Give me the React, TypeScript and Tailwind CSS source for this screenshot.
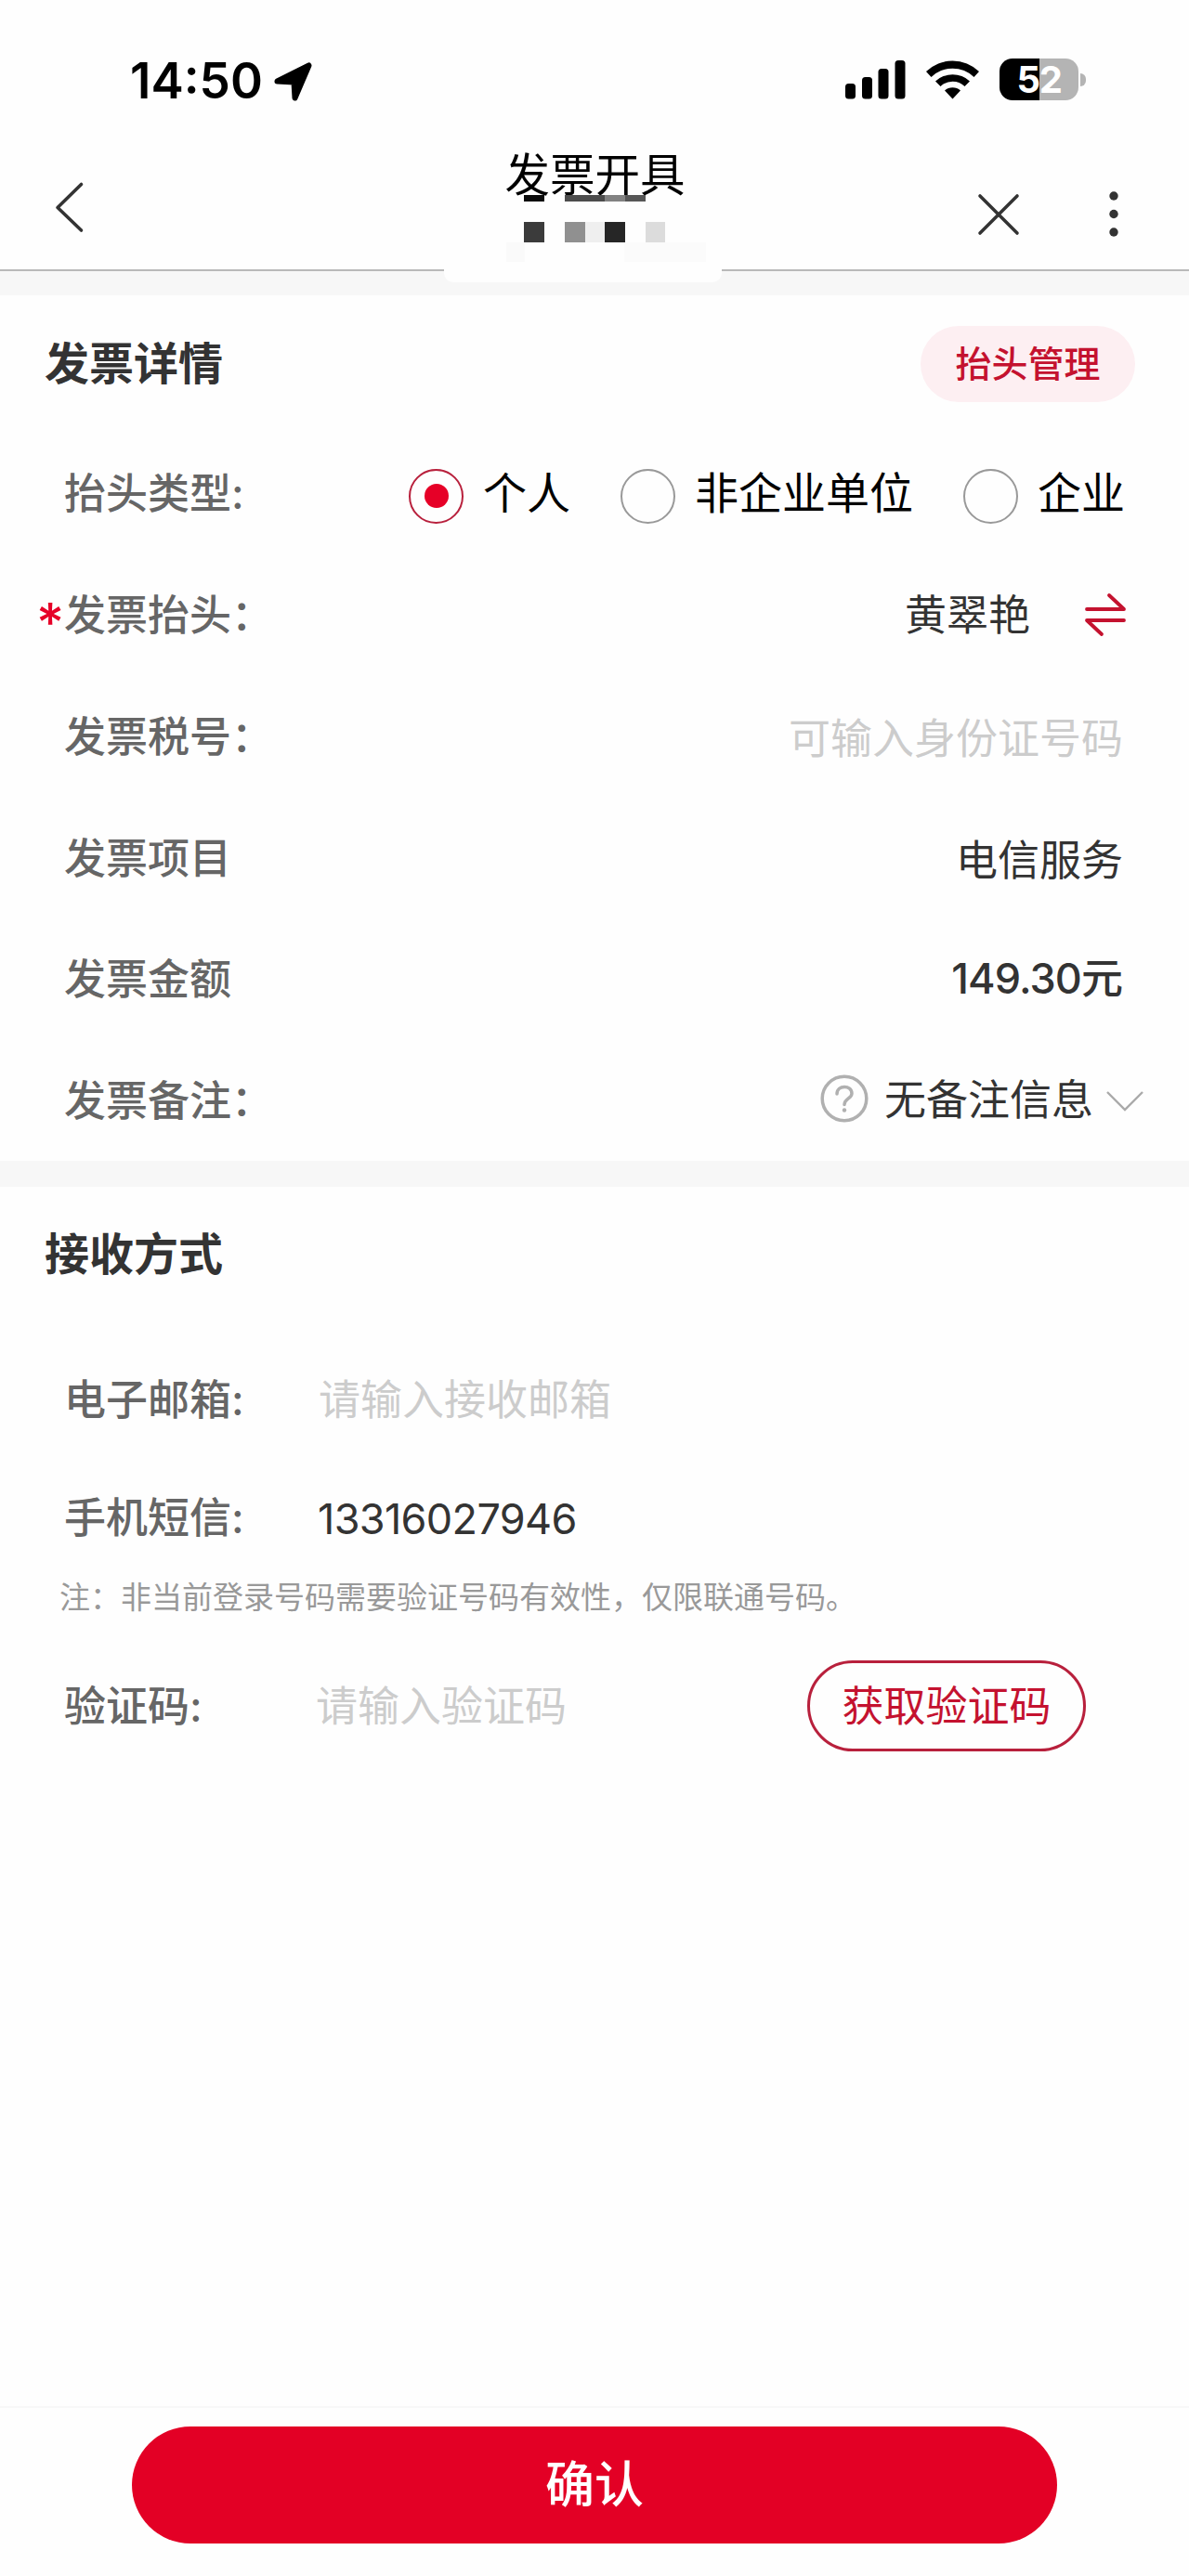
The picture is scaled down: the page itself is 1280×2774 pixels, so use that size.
import React from "react";

type RadioProps = { label: string; checked?: boolean };

function Radio({ label, checked = false }: RadioProps) {
  return (
    <div className="flex items-center gap-[21px] text-[47px] leading-none text-black">
      <span
        className={
          checked
            ? "mt-[8px] flex size-[59px] items-center justify-center rounded-full border-2 border-[#b8203c]"
            : "mt-[8px] flex size-[59px] items-center justify-center rounded-full border-2 border-[#999999]"
        }
      >
        {checked && <span className="size-[26px] rounded-full bg-[#e60027]" />}
      </span>
      <span>{label}</span>
    </div>
  );
}

type RowProps = {
  label: string;
  required?: boolean;
  colon?: string;
  children: React.ReactNode;
};

function Row({ label, required, colon, children }: RowProps) {
  return (
    <div className="flex h-[130.75px] items-center justify-between pl-[69px]">
      <div className="relative mt-[3px] text-[45px] leading-none font-medium text-[#666666]">
        {required && (
          <span className="absolute top-[1px] -left-[30px] text-[58px] leading-none text-[#e60027]">*</span>
        )}
        {label}
        {colon}
      </div>
      {children}
    </div>
  );
}

function StatusBar() {
  return (
    <div className="flex h-[150px] items-start justify-between pr-[111px] pl-[140px]">
      <div className="flex items-center pt-[61px]">
        <span className="text-[53px] leading-none font-semibold text-black">14:50</span>
        <svg className="ml-[12px] size-[42px]" viewBox="0 0 42 42">
          <path
            d="M37.5 3.5 L22.5 38.5 L21.5 21.5 L3.5 20.5 Z"
            fill="#000"
            stroke="#000"
            strokeWidth="6"
            strokeLinejoin="round"
          />
        </svg>
      </div>
      <div className="flex pt-[63px]">
        <svg className="h-[45px] w-[66px]" viewBox="0 0 66 45">
          <rect x="1" y="27" width="11" height="16.5" rx="3.5" />
          <rect x="19" y="20" width="11" height="23.5" rx="3.5" />
          <rect x="36.5" y="11" width="11" height="32.5" rx="3.5" />
          <rect x="54.5" y="2" width="11" height="41.5" rx="3.5" />
        </svg>
        <svg className="ml-[21px] h-[45px] w-[59px]" viewBox="0 0 59 45">
          <path d="M1 14 A41 41 0 0 1 58 14 L52.5 20 A33 33 0 0 0 6.5 20 Z" />
          <path d="M11 24.5 A27 27 0 0 1 48 24.5 L42.5 30 A19 19 0 0 0 16.5 30 Z" />
          <path d="M21 34.5 A13 13 0 0 1 38 34.5 L29.5 43.5 Z" />
        </svg>
        <div className="ml-[21px] flex items-center gap-[2px]">
          <div className="flex h-[45px] w-[85px] items-center justify-center rounded-[14px] bg-[linear-gradient(to_right,#000_43.5px,#b4b4b4_43.5px)] text-[40px] leading-none font-bold tracking-[-1.5px] text-white">
            52
          </div>
          <span className="h-[14px] w-[6px] rounded-r-full bg-[#b4b4b4]" />
        </div>
      </div>
    </div>
  );
}

function Mosaic() {
  return (
    <div className="absolute top-[210px] left-[564px] w-[152px]">
      <div className="flex h-[7px]">
        <span className="w-[22px] bg-[#0a0a0a]" />
        <span className="ml-[22px] w-[43px] bg-[#4c4c4c]" />
        <span className="w-[22px] bg-[#828282]" />
        <span className="w-[22px] bg-[#565656]" />
      </div>
      <div className="mt-[22px] flex h-[22px]">
        <span className="w-[22px] bg-[#3b3b3b]" />
        <span className="ml-[22px] w-[22px] bg-[#909090]" />
        <span className="w-[21px] bg-[#efefef]" />
        <span className="w-[22px] bg-[#262626]" />
        <span className="ml-[22px] w-[21px] bg-[#dcdcdc]" />
      </div>
      <div className="-ml-[19px] flex h-[21px] justify-between">
        <span className="w-[20px] bg-[#fafafa]" />
        <span className="-mr-[44px] w-[88px] bg-[#fbfbfb]" />
      </div>
    </div>
  );
}

function NavBar() {
  return (
    <div className="flex h-[142px] items-start justify-between border-b-2 border-[#b9b9b9] pr-[73px] pl-[58px]">
      <svg className="mt-[45px] h-[56px] w-[34px]" viewBox="0 0 34 56" fill="none" stroke="#333" strokeWidth="3.6" strokeLinecap="round" strokeLinejoin="round">
        <path d="M29.5 3.5 L4 28.5 L29.5 53" />
      </svg>
      <h1 className="mt-[15px] ml-[139px] text-[48.5px] leading-none text-black">发票开具</h1>
      <div className="flex items-center pt-[56px]">
        <svg className="h-[50px] w-[50px]" viewBox="0 0 50 50" fill="none" stroke="#333" strokeWidth="3.6" strokeLinecap="round">
          <path d="M5 5 L45 45 M45 5 L5 45" />
        </svg>
        <svg className="ml-[91px] h-[50px] w-[16px]" viewBox="0 0 16 50" fill="#333">
          <circle cx="8" cy="5" r="4.7" />
          <circle cx="8" cy="24.5" r="4.7" />
          <circle cx="8" cy="44" r="4.7" />
        </svg>
      </div>
    </div>
  );
}

export default function App() {
  return (
    <div className="relative flex h-[2774px] w-[1280px] flex-col overflow-hidden bg-[#fefefe] font-['Inter','Noto_Sans_CJK_SC',sans-serif] whitespace-nowrap">
      <StatusBar />
      <NavBar />
      <div className="relative h-[26px] shrink-0 bg-[#f7f7f7]">
        <div className="absolute -top-[2px] left-[478px] h-[14px] w-[299px] rounded-b-[10px] bg-[#fefefe]" />
      </div>
      <Mosaic />

      <section>
        <div className="flex h-[147px] items-center justify-between pr-[58px] pl-[48px]">
          <h2 className="text-[48px] leading-none font-bold text-[#333333]">发票详情</h2>
          <button className="h-[82px] w-[231px] rounded-full bg-[#fdeff2] text-[39px] leading-none font-medium text-[#c4122f]">
            抬头管理
          </button>
        </div>
        <Row label="抬头类型" colon=":">
          <div className="flex items-center gap-[54px] pr-[69px]">
            <Radio label="个人" checked />
            <Radio label="非企业单位" />
            <Radio label="企业" />
          </div>
        </Row>
        <Row label="发票抬头" required colon="：">
          <div className="mt-[2px] flex items-center pr-[67px] text-[45px] leading-none text-[#333333]">
            黄翠艳
            <svg className="ml-[58px] h-[48px] w-[46px]" viewBox="0 0 46 48" fill="none" stroke="#c4122f" strokeWidth="3.8" strokeLinecap="round" strokeLinejoin="round">
              <path d="M3 18 H43 L27 3" />
              <path d="M43 30 H3 L19 45" />
            </svg>
          </div>
        </Row>
        <Row label="发票税号" colon="：">
          <span className="mt-[7px] pr-[71px] text-[45px] leading-none text-[#cccccc]">可输入身份证号码</span>
        </Row>
        <Row label="发票项目">
          <span className="mt-[7px] pr-[71px] text-[45px] leading-none text-[#333333]">电信服务</span>
        </Row>
        <Row label="发票金额">
          <span className="pr-[71px] text-[45px] leading-none font-medium text-[#333333]">
            <span className="tracking-[-0.9px]">149.30</span>元
          </span>
        </Row>
        <Row label="发票备注" colon="：">
          <div className="flex items-center pr-[49px]">
            <svg className="-mt-[3px] size-[52px]" viewBox="0 0 52 52" fill="none" stroke="#b0b0b0" strokeWidth="3.5" strokeLinecap="round">
              <circle cx="26" cy="26" r="23.8" />
              <path d="M18 21 C18 11 34 11 34 20.5 C34 26 26 26 26 32.5" />
              <circle cx="26" cy="38.5" r="2.2" fill="#b0b0b0" stroke="none" />
            </svg>
            <span className="ml-[17px] text-[45px] leading-none text-[#333333]">无备注信息</span>
            <svg className="mt-[4px] ml-[14px] h-[24px] w-[40px]" viewBox="0 0 40 24" fill="none" stroke="#aaa" strokeWidth="2.4">
              <path d="M1 2 L20 21 L39 2" />
            </svg>
          </div>
        </Row>
      </section>

      <div className="h-[28px] shrink-0 bg-[#f7f7f7]" />

      <section className="flex-1">
        <div className="flex h-[145px] items-center pl-[48px]">
          <h2 className="mt-[2px] text-[48px] leading-none font-bold text-[#333333]">接收方式</h2>
        </div>
        <div className="flex h-[168px] items-center pt-[2px] pl-[69px] text-[45px] leading-none">
          <span className="w-[274px] font-medium text-[#666666]">电子邮箱:</span>
          <span className="text-[#cccccc]">请输入接收邮箱</span>
        </div>
        <div className="flex h-[86px] items-center pt-[2px] pl-[69px] text-[45px] leading-none">
          <span className="w-[273px] font-medium text-[#666666]">手机短信:</span>
          <span className="mt-[2px] tracking-[-0.65px] text-[#333333]">13316027946</span>
        </div>
        <p className="flex h-[88px] items-center pl-[64px] text-[33px] leading-none text-[#999999]">
          注：非当前登录号码需要验证号码有效性，仅限联通号码。
        </p>
        <div className="flex h-[145px] items-center pl-[69px] text-[45px] leading-none">
          <span className="w-[271px] font-medium text-[#666666]">验证码:</span>
          <span className="w-[529px] text-[#cccccc]">请输入验证码</span>
          <button className="h-[98px] w-[300px] rounded-full border-3 border-[#b8203c] text-[45px] leading-none text-[#c4122f]">
            获取验证码
          </button>
        </div>
      </section>

      <footer className="flex h-[183px] justify-center border-t-2 border-[#f8f8f8] pt-[20px]">
        <button className="h-[126px] w-[996px] rounded-full bg-[#e30025] text-[53px] leading-none font-medium text-white">
          确认
        </button>
      </footer>
    </div>
  );
}
